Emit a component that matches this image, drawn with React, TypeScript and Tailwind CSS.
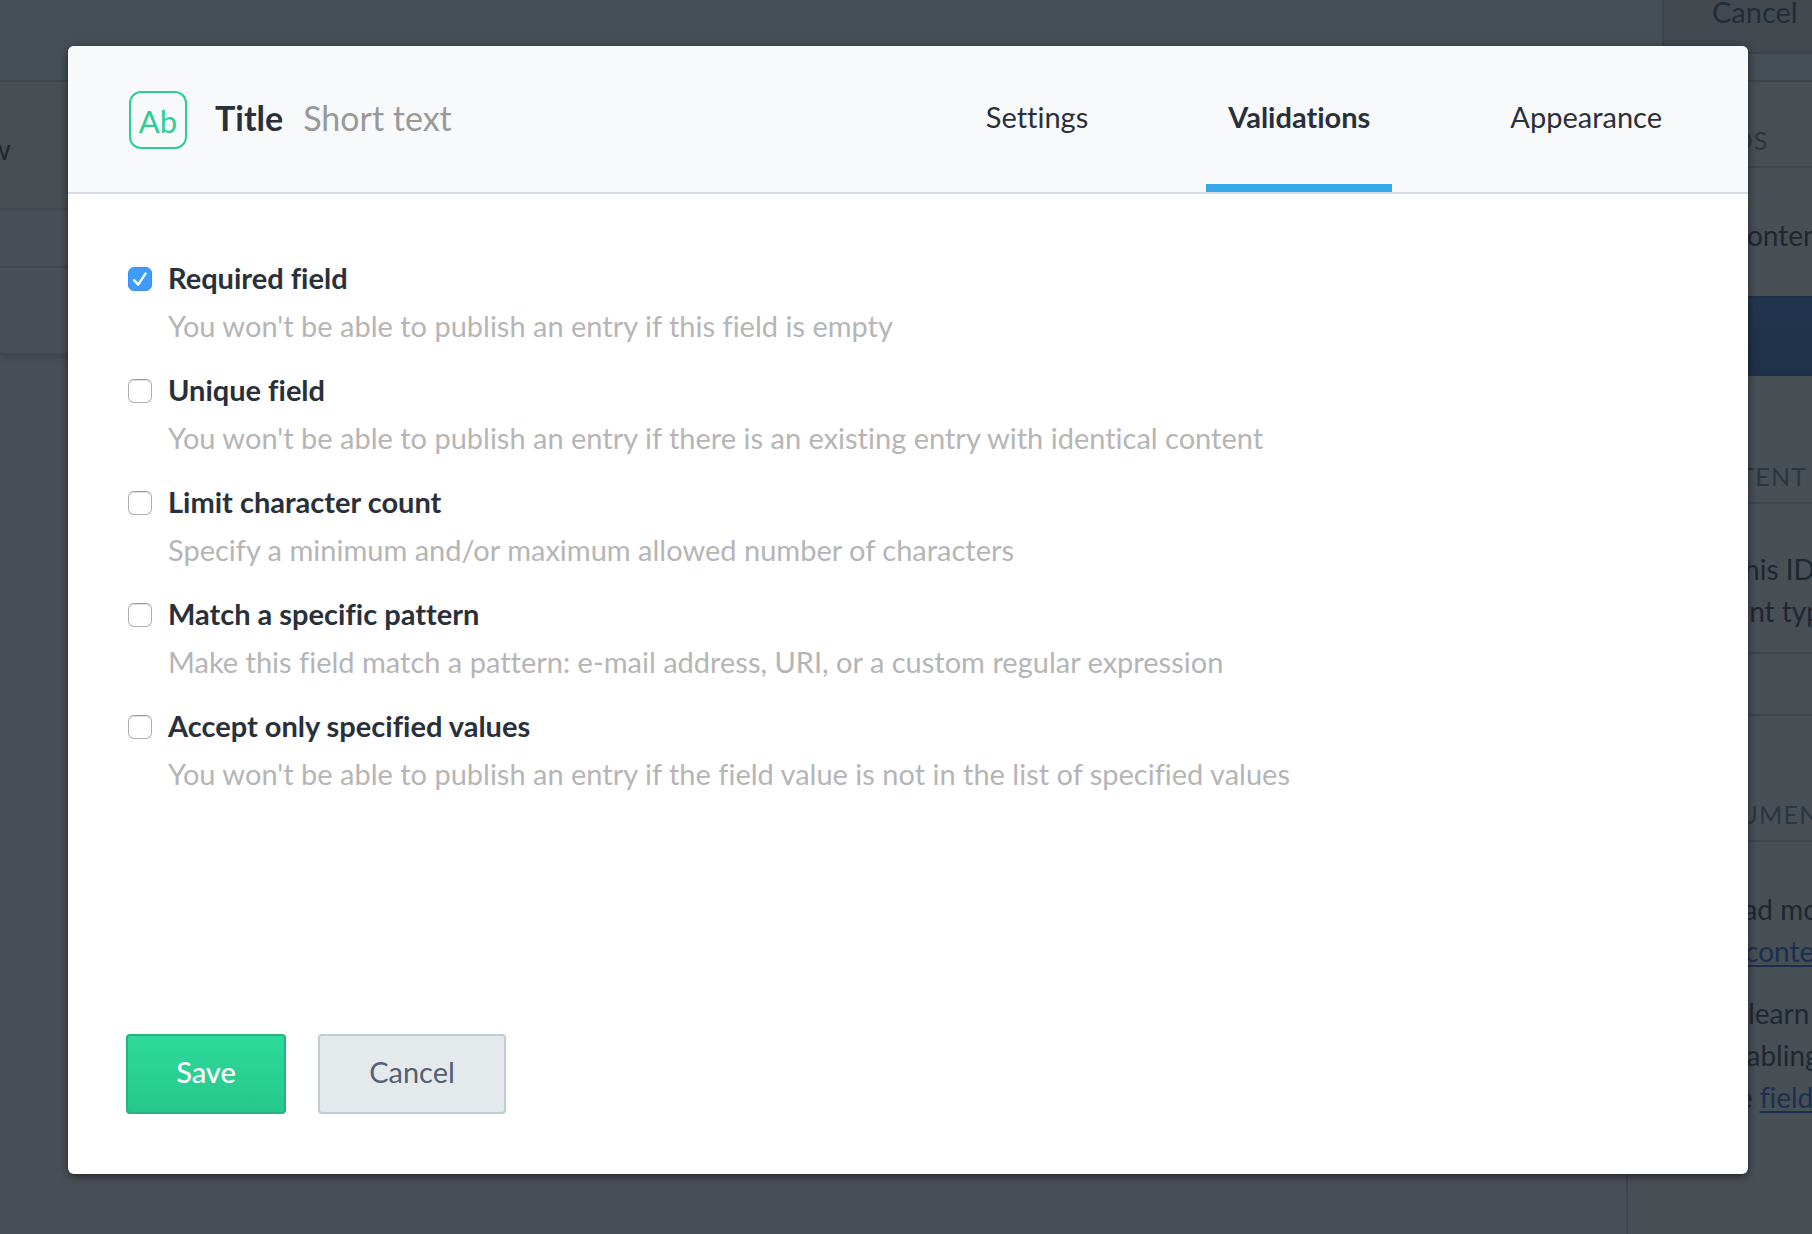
import { useState } from "react";

const RULES = [
  { id: "required", label: "Required field", hint: "You won't be able to publish an entry if this field is empty" },
  { id: "unique", label: "Unique field", hint: "You won't be able to publish an entry if there is an existing entry with identical content" },
  { id: "count", label: "Limit character count", hint: "Specify a minimum and/or maximum allowed number of characters" },
  { id: "pattern", label: "Match a specific pattern", hint: "Make this field match a pattern: e-mail address, URI, or a custom regular expression" },
  { id: "values", label: "Accept only specified values", hint: "You won't be able to publish an entry if the field value is not in the list of specified values" },
];

const TABS = ["Settings", "Validations", "Appearance"];

function Backdrop() {
  return (
    <div aria-hidden="true" inert className="absolute inset-0 flex flex-col overflow-hidden whitespace-nowrap leading-[42px] text-[#1f2731]">
      <div className="flex h-[82px] shrink-0 items-start justify-end border-b-2 border-[#3b454b] bg-[#474f56]">
        <button type="button" className="h-[54px] w-[150px] border-b-2 border-l-2 border-[#3a434a] bg-[#43494f] pb-7 pl-12 text-left leading-6 text-[#232c38]">
          Cancel
        </button>
      </div>
      <div className="flex min-h-0 grow">
        <div className="flex grow flex-col bg-[#4a4e56]">
          <div className="flex h-[273px] flex-col border-b-2 border-[#42474e] bg-[#484e54] shadow-md">
            <div className="flex h-32 items-center border-b-2 border-[#42474e]">
              <span className="-ml-3 mt-2">w</span>
            </div>
            <div className="h-[58px] border-b-2 border-[#42474e] bg-[#4a4e56]" />
            <div className="grow bg-[#4a4e56]" />
          </div>
        </div>
        <aside className="flex w-[186px] shrink-0 flex-col border-l-2 border-[#3b454b] bg-[#484f55] pl-[52px] text-[28px]">
          <h2 className="h-[86px] border-b-2 border-[#3d464d] pt-[38px] text-[25px] leading-10 tracking-wider text-[#2b3641]">FIELDS</h2>
          <p className="mt-[46px]">The content type</p>
          <div className="mt-10 h-20 border-y-2 border-[#1c3149] bg-linear-to-b from-[#21364e] to-[#1e3149]" />
          <h2 className="mt-20 h-[48px] border-b-2 border-[#3d464d] text-[25px] leading-10 tracking-wider text-[#2b3641]">CONTENT TYPE ID</h2>
          <p className="mt-11">Use this ID to retrieve<br />content type</p>
          <div className="mt-5 h-16 border-y-2 border-[#3d464d]" />
          <h2 className="mt-[78px] h-[48px] border-b-2 border-[#3d464d] text-[25px] leading-10 tracking-wider text-[#2b3641]">DOCUMENTATION</h2>
          <ul className="mt-[46px] flex flex-col gap-5 pl-8">
            <li>Read more about<br />to <a href="#types" className="text-[#1b3050] underline decoration-2 underline-offset-3">content types</a></li>
            <li>To learn more<br />disabling or<br />the <a href="#fields" className="text-[#1b3050] underline decoration-2 underline-offset-3">field settings</a></li>
          </ul>
        </aside>
      </div>
    </div>
  );
}

export default function App() {
  const [tab, setTab] = useState("Validations");
  const [on, setOn] = useState<string[]>(["required"]);
  const toggle = (id: string) => setOn(on.includes(id) ? on.filter((x) => x !== id) : [...on, id]);

  return (
    <div className="relative min-h-screen bg-[#4a4e56] font-[Lato,sans-serif] text-[29px] leading-10 [font-variant-ligatures:none]">
      <Backdrop />
      <main className="relative flex min-h-screen pt-[46px] pr-16 pb-[60px] pl-[68px]">
        <section role="dialog" aria-labelledby="field-title" className="flex grow flex-col rounded-md bg-white text-[#2a3039] shadow-[0_2px_8px_rgba(0,0,0,0.55)]">
          <header className="flex h-[148px] shrink-0 items-stretch justify-between rounded-t-md border-b-2 border-[#d6dce5] bg-[#f7f9fb] pr-16 pl-[61px]">
            <div className="flex items-center pt-0.5">
              <span className="flex size-[58px] items-center justify-center rounded-xl border-2 border-[#2ccf91] pt-0.5 text-[31px] text-[#2ccf91]">Ab</span>
              <h1 id="field-title" className="ml-7 pb-1 text-[34px] font-bold">Title</h1>
              <span className="ml-5 pb-1 text-[34px] text-[#999]">Short text</span>
            </div>
            <nav role="tablist" className="flex items-stretch gap-24">
              {TABS.map((t) => (
                <button
                  key={t}
                  type="button"
                  role="tab"
                  aria-selected={t === tab}
                  onClick={() => setTab(t)}
                  className={t === tab ? "border-b-8 border-[#37a9e8] px-[22px] pt-1 font-bold" : "border-b-8 border-transparent px-[22px] pt-1"}
                >
                  {t}
                </button>
              ))}
            </nav>
          </header>
          <div className="flex flex-col gap-5 pt-16 pl-[60px]">
            {RULES.map((r) => (
              <div key={r.id} className="flex gap-4">
                <span className="grid h-[42px] place-items-center">
                  <input
                    id={r.id}
                    type="checkbox"
                    aria-describedby={r.id + "-hint"}
                    checked={on.includes(r.id)}
                    onChange={() => toggle(r.id)}
                    className="peer col-start-1 row-start-1 size-6 appearance-none rounded-md border border-[#b0b0b0] border-t-[#999] bg-white shadow-[inset_0_1px_1px_rgba(0,0,0,0.12)] checked:border-[#3b91f3] checked:bg-[#409cfb] checked:shadow-none"
                  />
                  <svg viewBox="0 0 24 24" className="pointer-events-none col-start-1 row-start-1 hidden size-6 peer-checked:block" fill="none" stroke="white" strokeWidth="2.4" strokeLinecap="round" strokeLinejoin="round">
                    <path d="M6.2 13.2 10.2 17.6 17.6 6.4" />
                  </svg>
                </span>
                <div>
                  <label htmlFor={r.id} className="block font-bold">{r.label}</label>
                  <p id={r.id + "-hint"} className="mt-1 leading-12 text-[#b5b5b5]">{r.hint}</p>
                </div>
              </div>
            ))}
          </div>
          <footer className="mt-auto flex gap-8 pb-[60px] pl-[58px]">
            <button type="button" className="h-20 w-40 rounded border-2 border-[#25b47e] bg-linear-to-b from-[#2dda9a] to-[#27c78c] pb-1 font-medium text-white">Save</button>
            <button type="button" className="h-20 w-[188px] rounded border-2 border-[#c0ccd4] bg-[#e4e9ec] pb-1 text-[#536071]">Cancel</button>
          </footer>
        </section>
      </main>
    </div>
  );
}
